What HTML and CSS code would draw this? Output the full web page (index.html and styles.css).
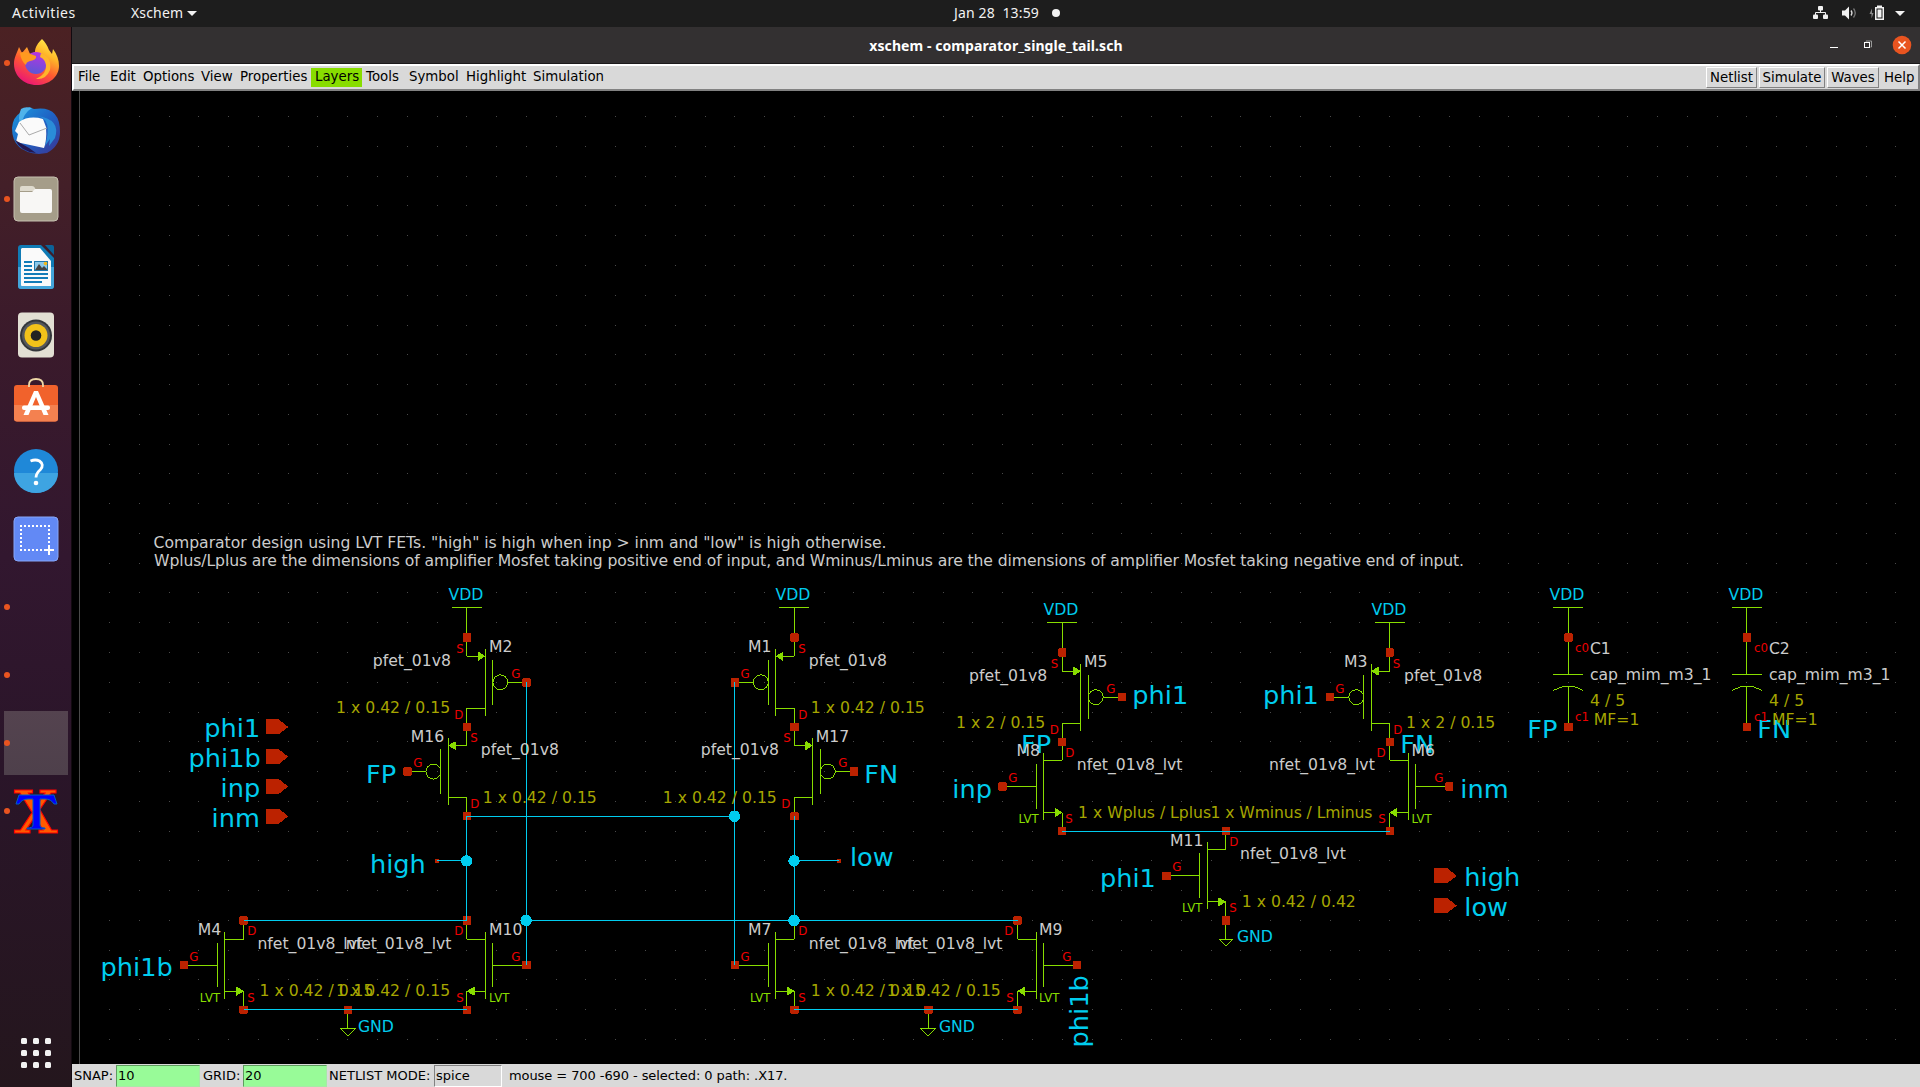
FILE: index.html
```html
<!DOCTYPE html>
<html lang="en">
<head>
<meta charset="utf-8">
<title>xschem - comparator_single_tail.sch</title>
<link rel="stylesheet" href="styles.css">
</head>
<body>
<header class="topbar">
  <span class="activities">Activities</span>
  <span class="appname">Xschem <i class="caret"></i></span>
  <span class="clock">Jan 28&nbsp; 13:59 <i class="bullet"></i></span>
  <svg class="tray" width="110" height="27" viewBox="0 0 110 27">
    <g fill="#f2f2f2">
      <rect x="8" y="6" width="5" height="4.500" rx="1"/><rect x="3" y="14.500" width="5" height="4.500" rx="1"/><rect x="8" y="14.500" width="5" height="4.500" rx="1" opacity="0"/><rect x="13" y="14.500" width="5" height="4.500" rx="1"/><rect x="10" y="10" width="1" height="3"/>
      <path d="M32 10.500h3l4-4v13l-4-4h-3z"/>
      <path d="M65 7h2V5.500h5V7h2v13h-9zM66.500 8.500v10h6v-10z" fill-rule="evenodd"/><rect x="67.500" y="9.500" width="4" height="8"/>
      <path d="M85 11h10l-5 5z"/>
    </g>
    <path d="M5.500 15v-2.500h10V15" fill="none" stroke="#f2f2f2"/>
    <path d="M41 10.500q2 2.500 0 5" fill="none" stroke="#ddd" stroke-width="1.300"/>
    <path d="M43.500 8.500q3.500 4.500 0 9" fill="none" stroke="#777" stroke-width="1.300"/>
    <path d="M62 8.500l-2.500 5.500h2v4.500l2-5.500h-1.500z" fill="#8a8a8a"/>
  </svg>
</header>
<div class="desktop">
  <nav class="dock">
    <div class="slot running">
      <svg viewBox="0 0 72 68">
        <defs>
          <linearGradient id="ffBody" x1=".8" y1="0" x2=".25" y2="1"><stop offset="0" stop-color="#fff44f"/><stop offset=".3" stop-color="#ffb629"/><stop offset=".6" stop-color="#ff5a30"/><stop offset="1" stop-color="#e8107c"/></linearGradient>
          <linearGradient id="ffGlobe" x1=".6" y1="0" x2=".4" y2="1"><stop offset="0" stop-color="#b833e1"/><stop offset="1" stop-color="#5b57d6"/></linearGradient>
        </defs>
        <path d="M42 10c3 3 5 6 7 11l3 4 1-5c4 5 6 11 6 17 0 11-10 19-22.500 19S14 47 14 35c0-7 3-11 5-17l3 6 5-6 3 7 5-2c0-5 3-9 7-13z" fill="url(#ffBody)"/>
        <circle cx="36" cy="34" r="11" fill="url(#ffGlobe)"/>
        <path d="M20 24q4-2 8 0l8 3q1 4-6 5-4 1-4 4-5-4-6-12z" fill="#ff9a1f"/>
        <path d="M41 24q11 4 9 17-4 10-14 9 11-5 10-14-1-6-6-8z" fill="#ffb52b"/>
      </svg>
    </div>
    <div class="slot">
      <svg viewBox="0 -1 72 68">
        <defs><linearGradient id="tb" x1="0" y1="0" x2="1" y2="1"><stop offset="0" stop-color="#1b9ce0"/><stop offset=".5" stop-color="#1f62c4"/><stop offset="1" stop-color="#3b3392"/></linearGradient></defs>
        <path d="M24 15l5-6 5 2q26-4 26 23 0 14-13 21l-8 1Q12 54 12 30q1-11 8-15z" fill="url(#tb)"/>
        <path d="M21 11q4-3 11-1-9 5-11 18-4-8 0-17z" fill="#4fb3ea"/>
        <path d="M19 24q10-7 24-3l3 8q1 14-2 21L16 44l2-8-3-3z" fill="#fafafa"/>
        <path d="M20 25l9 12 18-7" fill="none" stroke="#aaa"/>
        <path d="M15 42l14 8 7 5q-15-1-21-13z" fill="#23174f"/>
        <path d="M37 18q16 2 8 30l5-7-1 7 6-8q6-19-18-22z" fill="#2a8cd8"/>
      </svg>
    </div>
    <div class="slot running">
      <svg viewBox="0 0 72 68">
        <rect x="14" y="12" width="44" height="44" rx="4" fill="#a59d89" stroke="#c6c0b0"/>
        <path d="M20 23q0-2 2-2h10q2 0 3 2l1 3H20z" fill="#dedacd"/>
        <path d="M20 27h12l3-3h15q2 0 2 2v20q0 2-2 2H22q-2 0-2-2z" fill="#f8f7f5"/>
      </svg>
    </div>
    <div class="slot">
      <svg viewBox="0 0 72 68">
        <path d="M21 12h20l13 13v28q0 3-3 3H21q-3 0-3-3V15q0-3 3-3z" fill="#107bb5"/>
        <path d="M18 34h36v19q0 3-3 3H21q-3 0-3-3z" fill="#43a5da"/>
        <path d="M45 12h7q2 0 2 2v8z" fill="#0b6399"/>
        <path d="M22 15h18l11 13v25H22q-1 0-1-1V16z" fill="#fafafa"/>
        <path d="M24 29h8M24 33h8M24 37h8M24 41h24M24 45h24M24 49h18" stroke="#127cb8" stroke-width="2"/>
        <rect x="34" y="28" width="14" height="10" fill="#1d78ad"/><rect x="35" y="29" width="12" height="8" fill="#8cc9ea"/>
        <path d="M35 37l4-6 3 4 2-2 3 3v1z" fill="#444"/><circle cx="45.500" cy="30.500" r="1.800" fill="#f3b91c"/>
      </svg>
    </div>
    <div class="slot">
      <svg viewBox="0 0 72 68">
        <rect x="18" y="11.500" width="36" height="45" rx="4" fill="#e2dfd3"/>
        <circle cx="36" cy="34.500" r="16" fill="#33363a"/><circle cx="36" cy="34.500" r="14" fill="#55585c"/>
        <circle cx="36" cy="34.500" r="11.500" fill="#f2c21a"/><circle cx="36" cy="34.500" r="5.300" fill="#222"/>
      </svg>
    </div>
    <div class="slot">
      <svg viewBox="0 0 72 68">
        <path d="M29 19v-3q0-6 7-6t7 6v3" fill="none" stroke="#eed8a6" stroke-width="1.800"/>
        <rect x="14" y="16" width="44" height="36.500" rx="3" fill="#f1622c"/><path d="M14 36h44l0 13.500q0 3-3 3H17q-3 0-3-3z" fill="#f48150"/>
        <path d="M29 18v-2M43 18v-2" stroke="#eed8a6" stroke-width="1.800"/>
        <path d="M34 22h4l10.500 24h-5L36 28l-7.500 18h-5z" fill="#fff"/><rect x="22" y="36.500" width="28" height="4.500" rx="2" fill="#fff"/>
      </svg>
    </div>
    <div class="slot">
      <svg viewBox="0 0 72 68">
        <circle cx="36" cy="34" r="22" fill="#1f88d8"/><path d="M14 36a22 20 0 0 0 44 0z" fill="#3ea4e2"/>
        <path d="M30.500 24q5-2 9 0 5 3.500 1 8.500-4.500 4-4.500 8" fill="none" stroke="#fff" stroke-width="2.800"/><circle cx="36" cy="46" r="2.300" fill="#fff"/>
      </svg>
    </div>
    <div class="slot">
      <svg viewBox="0 0 72 68">
        <rect x="14" y="12" width="44" height="44" rx="4" fill="#6289f5" stroke="#86a6f8"/>
        <path d="M20 21h30M20 45h25" stroke="#fff" stroke-width="2" stroke-dasharray="2 2"/><path d="M21 20v26M49 20v20" stroke="#fff" stroke-width="2" stroke-dasharray="2 2"/>
        <path d="M44 45h10M49 40v10" stroke="#fff" stroke-width="2"/>
      </svg>
    </div>
    <div class="slot running"></div>
    <div class="slot running"></div>
    <div class="slot running active"></div>
    <div class="slot running">
      <svg viewBox="0 0 72 68">
        <g fill="#ff5a00" stroke="#f00" stroke-width="1.200"><path d="M14.500 13h18v3h-4l11 16 12 21h6v3H39v-3h4L20 16h-5.500zM40 13h16v3h-5L26 53h4v3H14.500v-3h6L45 16h-5z"/></g>
        <path d="M19 18h35l3 9h-3q-3-5-9-5h-5v26q0 3 5 3v1H27v-1q6 0 6-3V22h-5q-6 0-9 5h-3z" fill="#00f" stroke="#0060c0"/>
      </svg>
    </div>
    <div class="apps"><i></i><i></i><i></i><i></i><i></i><i></i><i></i><i></i><i></i></div>
  </nav>
  <main class="window">
    <div class="titlebar">
      <span class="title">xschem - comparator_single_tail.sch</span>
      <svg class="controls" width="110" height="36" viewBox="0 0 110 36">
        <path d="M20 20.500h8" stroke="#fff"/>
        <rect x="54.500" y="15.500" width="5" height="5" fill="none" stroke="#fff"/><path d="M56 14.500v-.5h5.500v6h-1" fill="none" stroke="#999"/>
        <circle cx="92" cy="18" r="9.300" fill="#e95420"/><path d="M88.500 14.500l7 7M95.500 14.500l-7 7" stroke="#fff" stroke-width="1.500"/>
      </svg>
    </div>
    <div class="menubar">
      <div class="menus"><span>File</span><span>Edit</span><span>Options</span><span>View</span><span>Properties</span><span class="layers">Layers</span><span>Tools</span><span>Symbol</span><span>Highlight</span><span>Simulation</span></div>
      <div class="actions"><button class="netlist">Netlist</button><button class="simulate">Simulate</button><button class="waves">Waves</button><span>Help</span></div>
    </div>
    <svg class="schematic" viewBox="72 91 1848 973" width="1848" height="973">
      <defs>
        <g id="nfet">
          <path d="M-20 0H2.500M2.500-15V15M7.500-22.500V22.500M7.500-17.500H20V-30M7.500 17.500H20V30"/>
          <path class="solid" d="M15.200 14.800V20.200L19.600 17.500z"/>
        </g>
        <g id="pfet">
          <path d="M-20 0H-7.500M2.500-15V15M7.500-22.500V22.500M7.500-17.500H20V-30M7.500 17.500H20V30"/>
          <circle cx="-2.500" cy="0" r="5"/>
          <path class="solid" d="M12.300-14.800V-20.200L8-17.500z"/>
        </g>
        <path id="vdd" d="M0 0V-20M-10-20H10"/>
        <path id="gnd" d="M0 0V12.500M-5 12.500H5L0 17.500z"/>
        <path id="cap" d="M0-30V-5M-10-5H10M0 30V2.500M-10 5.500Q-5 2.500 0 2.500T10 5.500"/>
        <rect id="pin" x="-2.500" y="-2.500" width="5" height="5"/>
        <rect id="tap" x="-1.200" y="-1.200" width="2.400" height="2.400"/>
        <path id="port" d="M0-5H8.700L15 0 8.700 5H0z"/>
        <circle id="dot" cx="-.2" cy="0" r="3.850"/>
      </defs>
      <path class="axis" d="M79.500 91V1064"/>
      <path class="grid" d="M109.100 116.500H1920M109.100 146.500H1920M109.100 176.500H1920M109.100 205.500H1920M109.100 235.500H1920M109.100 265.500H1920M109.100 295.500H1920M109.100 325.500H1920M109.100 354.500H1920M109.100 384.500H1920M109.100 414.500H1920M109.100 444.500H1920M109.100 473.500H1920M109.100 503.500H1920M109.100 533.500H1920M109.100 563.500H1920M109.100 592.500H1920M109.100 622.500H1920M109.100 652.500H1920M109.100 682.500H1920M109.100 712.500H1920M109.100 741.500H1920M109.100 771.500H1920M109.100 801.500H1920M109.100 831.500H1920M109.100 860.500H1920M109.100 890.500H1920M109.100 920.500H1920M109.100 950.500H1920M109.100 979.500H1920M109.100 1009.500H1920M109.100 1039.500H1920"/>
      <g class="sheet" transform="translate(109.620 116.650) scale(1.4885)">
        <g class="device">
          <use href="#pfet" transform="translate(260 380) scale(-1 1)"/>
          <use href="#pfet" transform="translate(440 380)"/>
          <use href="#pfet" transform="translate(220 440)"/>
          <use href="#pfet" transform="translate(480 440) scale(-1 1)"/>
          <use href="#pfet" transform="translate(660 390) scale(-1 1)"/>
          <use href="#pfet" transform="translate(840 390)"/>
          <use href="#nfet" transform="translate(620 450)"/>
          <use href="#nfet" transform="translate(880 450) scale(-1 1)"/>
          <use href="#nfet" transform="translate(730 510)"/>
          <use href="#nfet" transform="translate(70 570)"/>
          <use href="#nfet" transform="translate(260 570) scale(-1 1)"/>
          <use href="#nfet" transform="translate(440 570)"/>
          <use href="#nfet" transform="translate(630 570) scale(-1 1)"/>
          <use href="#vdd" x="240" y="350"/><use href="#vdd" x="460" y="350"/><use href="#vdd" x="640" y="360"/><use href="#vdd" x="860" y="360"/><use href="#vdd" x="980" y="350"/><use href="#vdd" x="1100" y="350"/>
          <use href="#gnd" x="160" y="600"/><use href="#gnd" x="550" y="600"/><use href="#gnd" x="750" y="540"/>
          <use href="#cap" x="980" y="380"/><use href="#cap" x="1100" y="380"/>
        </g>
        <g class="pins">
          <use href="#pin" x="240" y="350"/><use href="#pin" x="280" y="380"/><use href="#pin" x="240" y="410"/><use href="#pin" x="200" y="440"/><use href="#pin" x="240" y="470"/>
          <use href="#pin" x="460" y="350"/><use href="#pin" x="420" y="380"/><use href="#pin" x="460" y="410"/><use href="#pin" x="500" y="440"/><use href="#pin" x="460" y="470"/>
          <use href="#pin" x="640" y="360"/><use href="#pin" x="680" y="390"/><use href="#pin" x="640" y="420"/><use href="#pin" x="600" y="450"/><use href="#pin" x="640" y="480"/>
          <use href="#pin" x="860" y="360"/><use href="#pin" x="820" y="390"/><use href="#pin" x="860" y="420"/><use href="#pin" x="900" y="450"/><use href="#pin" x="860" y="480"/>
          <use href="#pin" x="750" y="480"/><use href="#pin" x="710" y="510"/><use href="#pin" x="750" y="540"/>
          <use href="#pin" x="90" y="540"/><use href="#pin" x="50" y="570"/><use href="#pin" x="90" y="600"/><use href="#pin" x="160" y="600"/>
          <use href="#pin" x="240" y="540"/><use href="#pin" x="280" y="570"/><use href="#pin" x="240" y="600"/>
          <use href="#pin" x="420" y="570"/><use href="#pin" x="460" y="600"/><use href="#pin" x="550" y="600"/>
          <use href="#pin" x="610" y="540"/><use href="#pin" x="650" y="570"/><use href="#pin" x="610" y="600"/>
          <use href="#pin" x="980" y="350"/><use href="#pin" x="980" y="410"/><use href="#pin" x="1100" y="350"/><use href="#pin" x="1100" y="410"/>
          <use href="#tap" x="220" y="500"/><use href="#tap" x="490" y="500"/>
          <use href="#port" x="105" y="410"/><use href="#port" x="105" y="430"/><use href="#port" x="105" y="450"/><use href="#port" x="105" y="470"/>
          <use href="#port" x="890" y="510"/><use href="#port" x="890" y="530"/>
        </g>
        <path class="wire" d="M280 380V570M420 380V570M240 470H420M240 470V540M220 500H240M90 540H240M280 540H610M460 470V540M460 500H490M90 600H240M460 600H610M640 480H860"/>
        <g class="dots"><use href="#dot" x="240" y="500"/><use href="#dot" x="280" y="540"/><use href="#dot" x="420" y="470"/><use href="#dot" x="460" y="500"/><use href="#dot" x="460" y="540"/></g>
      </g>
      <g class="net" transform="translate(-1.700 .4)">
        <text x="206" y="737">phi1</text><text x="190.300" y="766.500">phi1b</text><text x="222.300" y="796.500">inp</text><text x="213.300" y="826.500">inm</text>
        <text x="367.700" y="783">FP</text><text x="866" y="783">FN</text><text x="371.700" y="872.300">high</text><text x="851.700" y="866">low</text>
        <text x="102.300" y="976">phi1b</text><text x="954" y="797.700">inp</text><text x="1134" y="703.300">phi1</text><text x="1022.700" y="753">FP</text>
        <text x="1264.700" y="703.300">phi1</text><text x="1402" y="753">FN</text><text x="1462" y="797.700">inm</text><text x="1101.700" y="887">phi1</text>
        <text x="1466" y="886">high</text><text x="1466" y="916">low</text><text x="1529" y="738">FP</text><text x="1759" y="738">FN</text>
        <text transform="translate(1090 1047) rotate(-90)">phi1b</text>
      </g>
      <g class="supply" transform="translate(.4 0)">
        <text x="448" y="600.300">VDD</text><text x="775" y="600.300">VDD</text><text x="1043" y="615.300">VDD</text><text x="1371" y="615.300">VDD</text><text x="1549" y="600.300">VDD</text><text x="1728" y="600.300">VDD</text>
        <text x="357.500" y="1032">GND</text><text x="938.500" y="1032">GND</text><text x="1236.500" y="942.300">GND</text>
      </g>
      <g class="label" transform="translate(-.9 0)">
        <text x="154.500" y="547.500" textLength="733" lengthAdjust="spacing">Comparator design using LVT FETs. "high" is high when inp &gt; inm and "low" is high otherwise.</text>
        <text x="155" y="566" textLength="1310" lengthAdjust="spacing">Wplus/Lplus are the dimensions of amplifier Mosfet taking positive end of input, and Wminus/Lminus are the dimensions of amplifier Mosfet taking negative end of input.</text>
        <text x="490" y="652.300">M2</text><text x="373.700" y="666">pfet_01v8</text><text x="411.700" y="741.700">M16</text><text x="481.700" y="755.300">pfet_01v8</text>
        <text x="749" y="652.300">M1</text><text x="809.700" y="666">pfet_01v8</text><text x="816.700" y="741.700">M17</text><text x="701.700" y="755.300">pfet_01v8</text>
        <text x="1085" y="667">M5</text><text x="970" y="681">pfet_01v8</text><text x="1017.300" y="755.700">M8</text><text x="1077.700" y="770">nfet_01v8_lvt</text>
        <text x="1345" y="667">M3</text><text x="1405" y="681">pfet_01v8</text><text x="1412.300" y="755.700">M6</text><text x="1270" y="770">nfet_01v8_lvt</text>
        <text x="1171" y="846">M11</text><text x="1241" y="859">nfet_01v8_lvt</text>
        <text x="198.700" y="935">M4</text><text x="258.300" y="949">nfet_01v8_lvt</text><text x="490" y="935">M10</text><text x="346.700" y="949">nfet_01v8_lvt</text>
        <text x="749" y="935">M7</text><text x="809.700" y="949">nfet_01v8_lvt</text><text x="1040" y="935">M9</text><text x="897.700" y="949">nfet_01v8_lvt</text>
        <text x="1590.800" y="654">C1</text><text x="1590.800" y="680.300">cap_mim_m3_1</text><text x="1769.800" y="654">C2</text><text x="1769.800" y="680.300">cap_mim_m3_1</text>
      </g>
      <g class="size" transform="translate(-1.200 0)">
        <text x="337.300" y="713.300">1 x 0.42 / 0.15</text><text x="484" y="803.300">1 x 0.42 / 0.15</text><text x="812" y="713.300">1 x 0.42 / 0.15</text><text x="664" y="803.300">1 x 0.42 / 0.15</text>
        <text x="957.300" y="728.300">1 x 2 / 0.15</text><text x="1407.300" y="728.300">1 x 2 / 0.15</text>
        <text x="1079.300" y="817.700" textLength="133" lengthAdjust="spacing">1 x Wplus / Lplus</text><text x="1211.700" y="817.700" textLength="162" lengthAdjust="spacing">1 x Wminus / Lminus</text><text x="1243" y="907">1 x 0.42 / 0.42</text>
        <text x="260.700" y="996.300">1 x 0.42 / 0.15</text><text x="337.300" y="996.300">1 x 0.42 / 0.15</text><text x="812" y="996.300">1 x 0.42 / 0.15</text><text x="888" y="996.300">1 x 0.42 / 0.15</text>
        <text x="1591.300" y="706">4 / 5</text><text x="1595" y="725">MF=1</text><text x="1770.300" y="706">4 / 5</text><text x="1773.300" y="725">MF=1</text>
      </g>
      <g class="lvt" transform="translate(-.3 0)">
        <text x="1018.700" y="823">LVT</text><text x="1411.700" y="823">LVT</text><text x="1182.300" y="912">LVT</text><text x="200" y="1001.700">LVT</text><text x="489.300" y="1001.700">LVT</text><text x="750.300" y="1001.700">LVT</text><text x="1039.300" y="1001.700">LVT</text>
      </g>
      <g class="terminal" transform="translate(-.5 0)">
        <text x="456.700" y="652.700">S</text><text x="454.700" y="719">D</text><text x="511.700" y="677.700">G</text>
        <text x="470.700" y="741.700">S</text><text x="470.700" y="807.700">D</text><text x="413.700" y="766.700">G</text>
        <text x="798.700" y="652.700">S</text><text x="798.700" y="719">D</text><text x="741" y="677.700">G</text>
        <text x="783.700" y="741.700">S</text><text x="781.700" y="807.700">D</text><text x="838.700" y="766.700">G</text>
        <text x="1051.300" y="667.700">S</text><text x="1050.300" y="734">D</text><text x="1106.700" y="693">G</text>
        <text x="1393.300" y="667.700">S</text><text x="1393.700" y="734">D</text><text x="1335.700" y="693">G</text>
        <text x="1065.700" y="756.700">D</text><text x="1008.700" y="782">G</text><text x="1065.700" y="823">S</text>
        <text x="1377" y="756.700">D</text><text x="1434.700" y="782">G</text><text x="1378.700" y="823">S</text>
        <text x="1229.700" y="845.700">D</text><text x="1172.700" y="871">G</text><text x="1229.700" y="912">S</text>
        <text x="247.700" y="934.700">D</text><text x="189.700" y="961">G</text><text x="247.700" y="1001.700">S</text>
        <text x="454.700" y="934.700">D</text><text x="511.700" y="961">G</text><text x="456.700" y="1001.700">S</text>
        <text x="798.700" y="934.700">D</text><text x="741" y="961">G</text><text x="798.700" y="1001.700">S</text>
        <text x="1004.700" y="934.700">D</text><text x="1062.700" y="961">G</text><text x="1006.700" y="1001.700">S</text>
        <text x="1575.500" y="652.300">c0</text><text x="1575.500" y="721.300">c1</text><text x="1754.500" y="652.300">c0</text><text x="1754.500" y="721.300">c1</text>
      </g>
    </svg>
    <footer class="status">
      <span class="lbl snap">SNAP:</span><span class="entry">10</span>
      <span class="lbl gridlbl">GRID:</span><span class="entry">20</span>
      <span class="lbl mode">NETLIST MODE:</span><span class="entry plain">spice</span>
      <span class="mouse">mouse = 700 -690 - selected: 0 path: .X17.</span>
    </footer>
  </main>
</div>
</body>
</html>
```
FILE: styles.css
```css
* { box-sizing: border-box; }
body { margin: 0; width: 1920px; height: 1087px; overflow: hidden; background: #000; font-family: "DejaVu Sans", sans-serif; font-size: 13px; display: flex; flex-direction: column; }

.topbar { height: 27px; flex: none; background: #1d1d1d; color: #f2f2f2; font: 14px/26px "Noto Sans", sans-serif; letter-spacing: .15px; display: grid; grid-template-columns: 131px 1fr 1fr 110px; position: relative; }
.activities { padding-left: 12px; letter-spacing: .55px; }
.topbar .clock { position: absolute; left: 954px; top: 0; }
.tray { grid-column: 4; }
.caret { display: inline-block; border: 5px solid transparent; border-top: 5px solid #f2f2f2; border-bottom: 0; vertical-align: 2px; }
.bullet { display: inline-block; width: 8px; height: 8px; border-radius: 50%; background: #f2f2f2; margin-left: 9px; vertical-align: 1px; }

.desktop { flex: 1; display: flex; min-height: 0; }
.dock { width: 72px; flex: none; padding-top: 2px; border-right: 1px solid #120a10; background: linear-gradient(#4b2123 0, #431f28 15%, #3a1a2b 30%, #32172f 50%, #2a1529 70%, #24161d 100%); display: flex; flex-direction: column; }
.slot { height: 68px; width: 72px; flex: none; position: relative; }
.slot svg { width: 72px; height: 68px; display: block; }
.running::before { content: ""; position: absolute; left: 4px; top: 31px; width: 6px; height: 6px; border-radius: 50%; background: #e95420; }
.active { background: linear-gradient(#54434f, #4e404b) 4px 2px / 64px 64px no-repeat; }
.apps { margin: auto 0 19px 21px; display: grid; grid-template-columns: repeat(3, 6px); gap: 6px; }
.apps i { width: 6px; height: 6px; border-radius: 1.500px; background: #f2f2f2; }

.window { width: 1848px; display: flex; flex-direction: column; }
.titlebar { height: 37px; flex: none; background: #333031; border-bottom: 1px solid #1c1a1b; display: grid; grid-template-columns: 110px 1fr 110px; align-items: center; }
.title { grid-column: 2; text-align: center; color: #fff; font: bold 14px/36px "Noto Sans", sans-serif; letter-spacing: .07px; padding-top: 1px; height: 36px; }

.menubar { height: 27px; flex: none; background: #d9d9d9; border: 2px solid; border-color: #fff #828282 #828282 #fff; display: flex; justify-content: space-between; align-items: center; font-size: 13.330px; line-height: 18px; color: #000; }
.menus { display: flex; }
.menus span { padding-left: 4px; height: 19px; white-space: nowrap; }
.menus span:nth-child(1) { width: 32px; }
.menus span:nth-child(2) { width: 33px; }
.menus span:nth-child(3) { width: 58px; }
.menus span:nth-child(4) { width: 39px; }
.menus span:nth-child(5) { width: 75px; }
.menus span:nth-child(6) { width: 51px; background: #88dd00; }
.menus span:nth-child(7) { width: 43px; }
.menus span:nth-child(8) { width: 57px; }
.menus span:nth-child(9) { width: 67px; }
.actions { display: flex; gap: 2px; align-items: center; }
.actions button { height: 21px; padding: 0; border: 1px solid; border-color: #fff #828282 #828282 #fff; background: #d9d9d9; font: 13.330px/16px "DejaVu Sans", sans-serif; color: #000; }
.netlist { width: 51px; }
.simulate { width: 66px; }
.waves { width: 52px; }
.actions span { padding-left: 3px; width: 37px; }

.schematic { flex: none; display: block; background: #000; font-family: "DejaVu Sans", sans-serif; }
.grid { stroke: #4a4a4a; stroke-width: 1; stroke-dasharray: 1 28.770; shape-rendering: crispEdges; }
.axis { stroke: #4a4a4a; shape-rendering: crispEdges; }
.sheet { shape-rendering: crispEdges; }
.sheet path, .sheet circle, .sheet rect { vector-effect: non-scaling-stroke; }
#nfet path, #pfet path, #pfet circle, #vdd, #gnd, #cap, #pin, #tap { vector-effect: non-scaling-stroke; }
.device { stroke: #88dd00; stroke-width: 1; fill: none; }
.solid { fill: #88dd00; }
.pins { fill: #bb2200; stroke: #bb2200; stroke-width: 1; }
#port { stroke: none; }
.wire { stroke: #00ccee; stroke-width: 1; fill: none; }
.dots { fill: #00ccee; }
.net { fill: #00ccee; font-size: 25.600px; }
.supply { fill: #00ccee; font-size: 15.700px; }
.label { fill: #cccccc; font-size: 15.650px; }
.size { fill: #a6a600; font-size: 15.650px; }
.lvt { fill: #88dd00; font-size: 11.700px; }
.terminal { fill: #ee0000; font-size: 11.800px; }

.status { height: 23px; flex: none; background: #d9d9d9; color: #000; display: flex; align-items: flex-end; line-height: 19px; white-space: nowrap; }
.lbl { padding-left: 2px; height: 21px; }
.snap { width: 44px; }
.gridlbl { width: 43px; padding-left: 3px; }
.mode { width: 107px; padding-left: 2px; }
.entry { width: 84px; height: 22px; background: #98fb98; border: 1px solid; border-color: #5f9c5f #a8e8a8 #a8e8a8 #5f9c5f; padding-left: 1px; }
.plain { width: 68px; background: #d9d9d9; border-color: #828282 #fff #fff #828282; }
.mouse { padding-left: 7px; height: 21px; letter-spacing: -.08px; }
```
